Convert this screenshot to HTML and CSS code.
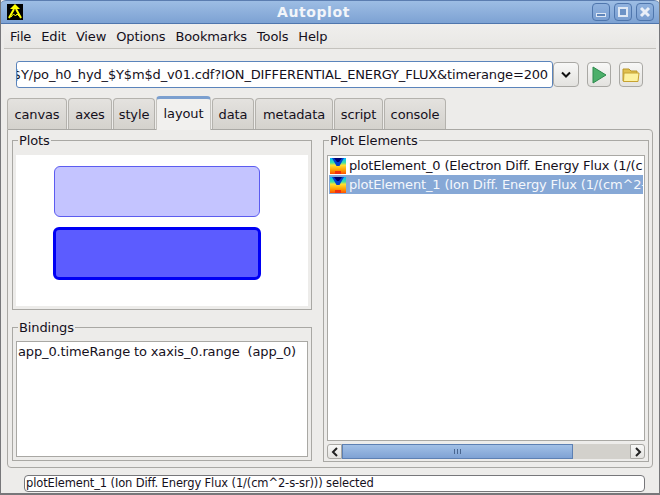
FILE: index.html
```html
<!DOCTYPE html>
<html lang="en">
<head>
  <meta charset="UTF-8">
  <title>Autoplot</title>
  <link rel="stylesheet" href="styles.css">
</head>
<body>

<div class="window">
  <div class="titlebar">
    <svg class="logo" width="16" height="16" viewBox="0 0 16 16">
      <rect width="16" height="16" fill="#000"/>
      <path d="M8 0L13 5H3Z" fill="#ffff00"/>
      <path d="M7 5L2 14M9 5L14 14" stroke="#ffff00" stroke-width="2" fill="none"/>
      <path d="M4 13L6.500 10L8.500 12L10 10L12 12" stroke="#ffff00" fill="none"/>
    </svg>
    <div class="title">Autoplot</div>
    <div class="winbtns">
      <div class="winbtn">
        <svg width="18" height="18" viewBox="0 0 18 18"><rect x="4.500" y="10.500" width="9" height="3" fill="#5f86bb" stroke="#dfe8f4"/></svg>
      </div>
      <div class="winbtn">
        <svg width="18" height="18" viewBox="0 0 18 18"><rect x="5" y="5" width="8" height="8" fill="#6d93c6" stroke="#dfe8f4" stroke-width="2"/></svg>
      </div>
      <div class="winbtn">
        <svg width="18" height="18" viewBox="0 0 18 18"><path d="M5 5L13 13M13 5L5 13" stroke="#e9eff8" stroke-width="3"/></svg>
      </div>
    </div>
  </div>

  <div class="menubar">
    <span>File</span><span>Edit</span><span>View</span><span>Options</span><span>Bookmarks</span><span>Tools</span><span>Help</span>
  </div>

  <div class="urlrow">
    <div class="urlfield"><span>$Y/po_h0_hyd_$Y$m$d_v01.cdf?ION_DIFFERENTIAL_ENERGY_FLUX&amp;timerange=200</span></div>
    <div class="btn combo">
      <svg width="12" height="8" viewBox="0 0 12 8"><path d="M2 1.500L6 5.500L10 1.500" fill="none" stroke="#111" stroke-width="2"/></svg>
    </div>
    <div class="btn play">
      <svg width="16" height="18" viewBox="0 0 16 18"><path d="M2 1L15 9L2 17Z" fill="#4caf6a" stroke="#2c8a4c"/></svg>
    </div>
    <div class="btn folder">
      <svg width="18" height="16" viewBox="0 0 18 16"><path d="M1 14V2H7L9 4H15V14Z" fill="#e0c050" stroke="#b8962a"/><path d="M1.500 14.500L2 6H17L16 14.500Z" fill="#fdf2a0" stroke="#c6a232"/></svg>
    </div>
  </div>

  <div class="tabs">
    <div class="tab tab-canvas">canvas</div>
    <div class="tab tab-axes">axes</div>
    <div class="tab tab-style">style</div>
    <div class="tab tab-layout active">layout</div>
    <div class="tab tab-data">data</div>
    <div class="tab tab-metadata">metadata</div>
    <div class="tab tab-script">script</div>
    <div class="tab tab-console">console</div>
  </div>

  <div class="panel">
    <div class="leftcol">
      <fieldset class="group plots">
        <legend>Plots</legend>
        <div class="canvas">
          <div class="plot plot-0"></div>
          <div class="plot plot-1"></div>
        </div>
      </fieldset>
      <fieldset class="group bindings">
        <legend>Bindings</legend>
        <div class="bindlist">app_0.timeRange to xaxis_0.range&nbsp; (app_0)</div>
      </fieldset>
    </div>

    <fieldset class="group elements">
      <legend>Plot Elements</legend>
      <div class="elist">
        <div class="row">
          <svg class="heat" width="16" height="16" viewBox="0 0 16 16"><use href="#heatmap"/></svg>
          <span>plotElement_0 (Electron Diff. Energy Flux (1/(cm^2-s-sr)))</span>
        </div>
        <div class="row selected">
          <svg class="heat" width="16" height="16" viewBox="0 0 16 16"><use href="#heatmap"/></svg>
          <span>plotElement_1 (Ion Diff. Energy Flux (1/(cm^2-s-sr)))</span>
        </div>
      </div>
      <div class="hscroll">
        <div class="arrow">
          <svg width="8" height="10" viewBox="0 0 8 10"><path d="M6 1L2 5L6 9" fill="none" stroke="#222" stroke-width="2"/></svg>
        </div>
        <div class="track">
          <div class="thumb"><i></i><i></i><i></i></div>
        </div>
        <div class="arrow">
          <svg width="8" height="10" viewBox="0 0 8 10"><path d="M2 1L6 5L2 9" fill="none" stroke="#222" stroke-width="2"/></svg>
        </div>
      </div>
    </fieldset>
  </div>

  <div class="statusrow">
    <div class="status">plotElement_1 (Ion Diff. Energy Flux (1/(cm^2-s-sr))) selected</div>
  </div>
</div>

<svg width="0" height="0" class="defs">
  <defs>
    <linearGradient id="heatfill" x1="0" y1="0" x2="0" y2="1">
      <stop offset="0" stop-color="#00b8ff"/>
      <stop offset="0.3" stop-color="#40e0a0"/>
      <stop offset="0.45" stop-color="#ffe030"/>
      <stop offset="0.75" stop-color="#ffa000"/>
      <stop offset="1" stop-color="#ff5000"/>
    </linearGradient>
    <g id="heatmap">
      <rect width="16" height="16" fill="url(#heatfill)"/>
      <path d="M2 0H14L9.500 8H6.500Z" fill="#0040d0"/>
      <path d="M4 0H12L9 4H7Z" fill="#000070"/>
      <rect x="5" y="13" width="6" height="3" fill="#f03010"/>
    </g>
  </defs>
</svg>

</body>
</html>
```

FILE: styles.css
```css
* {
  box-sizing: border-box;
}

body {
  margin: 0;
  background-color: #edecea;
  font-family: "DejaVu Sans", sans-serif;
  font-size: 13px;
  letter-spacing: -0.13px;
  color: #15101c;
}

.defs {
  display: block;
  height: 0;
}

.window {
  width: 660px;
  height: 495px;
  background-color: #edecea;
  border-left: 1px solid #77777a;
  border-right: 1px solid #77777a;
  border-bottom: 2px solid #77777a;
  overflow: hidden;
}

/* title bar */
.titlebar {
  height: 24px;
  margin: 0 -1px;
  padding: 3px 6px 0 7px;
  display: flex;
  background: linear-gradient(#9dbde4, #7da2d3);
  border-top: 1px solid #5b7db0;
  border-bottom: 1px solid #4f76ad;
  border-radius: 6px 6px 0 0;
}

.logo {
  flex: none;
}

.title {
  flex: 1;
  padding-left: 12px;
  text-align: center;
  font-size: 14px;
  font-weight: bold;
  letter-spacing: 0.6px;
  color: #f2f5fa;
}

.winbtns {
  display: flex;
  gap: 4px;
  margin-top: -1px;
}

.winbtn {
  width: 18px;
  height: 18px;
  border: 1px solid #4f76ad;
  border-radius: 4px;
  background: linear-gradient(#90b2de, #7a9fd1);
  display: flex;
  align-items: center;
  justify-content: center;
}

.winbtn svg {
  margin: -1px;
  flex: none;
}

/* menu */
.menubar {
  height: 25px;
  margin: 0 3px;
  padding: 1px 6px 0;
  display: flex;
  align-items: center;
  gap: 10px;
  border-bottom: 1px solid #c4c2bd;
  background: linear-gradient(#f0efed, #e8e7e4);
}

/* url row */
.urlrow {
  display: flex;
  align-items: center;
  height: 27px;
  margin: 12px 0 0 15px;
}

.urlfield {
  width: 537px;
  height: 27px;
  border: 1px solid #5b84bb;
  border-radius: 3px;
  background-color: #fff;
  overflow: hidden;
  display: flex;
  justify-content: flex-end;
  align-items: center;
  padding-right: 4px;
  letter-spacing: -0.15px;
  white-space: nowrap;
}

.btn {
  width: 24px;
  height: 25px;
  border: 1px solid #a9a8a4;
  border-radius: 4px;
  background: linear-gradient(#f8f8f7, #e3e2df);
  display: flex;
  align-items: center;
  justify-content: center;
}

.combo {
  margin-right: 8px;
  width: 26px;
}

.play {
  margin-right: 8px;
}

/* tabs */
.tabs {
  display: flex;
  align-items: flex-end;
  height: 33px;
  margin: 8px 0 0 6px;
  gap: 1px;
}

.tab {
  height: 31px;
  padding-top: 8px;
  text-align: center;
  border: 1px solid #b4b2ad;
  border-bottom: none;
  border-radius: 4px 4px 0 0;
  background: linear-gradient(#e4e2df, #d4d2cd);
}

.tab-canvas { width: 60px; }
.tab-axes { width: 44px; }
.tab-style { width: 42px; }
.tab-layout { width: 55px; }
.tab-data { width: 42px; }
.tab-metadata { width: 78px; }
.tab-script { width: 49px; }
.tab-console { width: 62px; }

.tab.active {
  height: 34px;
  margin-bottom: -1px;
  padding-top: 7px;
  position: relative;
  background: #f1f0ee;
  border-top: 3px solid #7b9fcf;
  border-color: #7b9fcf #c4c2bd #c4c2bd;
}

/* main panel */
.panel {
  width: 646px;
  height: 339px;
  margin-left: 6px;
  padding: 3px 3px 4px 4px;
  display: flex;
  gap: 11px;
  border: 1px solid #a9a8a4;
  border-radius: 0 4px 4px 4px;
}

.leftcol {
  width: 300px;
  display: flex;
  flex-direction: column;
  gap: 10px;
}

.group {
  margin: 0;
  padding: 0 3px 3px;
  min-width: 0;
  border: 1px solid #a9a8a4;
  display: flex;
  flex-direction: column;
}

.group legend {
  margin-left: 2px;
  padding: 0 1px;
  line-height: 15px;
}

.plots {
  height: 177px;
  padding-top: 7px;
}

.canvas {
  height: 151px;
  padding: 11px 0 0 38px;
  background-color: #fff;
}

.plot {
  width: 206px;
  height: 51px;
  border-radius: 6px;
}

.plot-0 {
  background-color: #c4c4ff;
  border: 1px solid #5c5cf0;
}

.plot-1 {
  width: 208px;
  height: 53px;
  margin: 10px 0 0 -1px;
  background-color: #5c5cff;
  border: 3px solid #0000f4;
}

.bindings {
  height: 141px;
  padding-top: 6px;
}

.bindlist {
  height: 116px;
  padding: 2px 1px;
  background-color: #fff;
  border: 1px solid #a9a8a4;
  white-space: nowrap;
}

.elements {
  width: 326px;
  height: 329px;
  padding-top: 7px;
}

.elist {
  height: 285px;
  flex: none;
  padding: 0 1px;
  background-color: #fff;
  border: 1px solid #a9a8a4;
  border-bottom: none;
  overflow: hidden;
}

.row {
  height: 19px;
  display: flex;
  align-items: center;
  gap: 3px;
  letter-spacing: -0.16px;
  white-space: nowrap;
  overflow: hidden;
}

.row.selected {
  background-color: #86a8d6;
  color: #f4f7fc;
}

.heat {
  flex: none;
  margin-left: 1px;
}

/* horizontal scrollbar */
.hscroll {
  height: 19px;
  flex: none;
  display: flex;
  border-top: 1px solid #a9a8a4;
  padding: 3px 0 0;
}

.arrow {
  width: 15px;
  flex: none;
  display: flex;
  align-items: center;
  justify-content: center;
  border: 1px solid #a9a8a4;
  background: linear-gradient(#f8f8f7, #e3e2df);
  border-radius: 3px 0 0 3px;
}

.arrow:last-child {
  border-radius: 0 3px 3px 0;
}

.track {
  flex: 1;
  background-color: #d3d1cc;
}

.thumb {
  width: 231px;
  height: 100%;
  display: flex;
  gap: 2px;
  align-items: center;
  justify-content: center;
  border: 1px solid #5d80b3;
  background: linear-gradient(#a2c0e6, #7fa2d4);
}

.thumb i {
  display: block;
  width: 1px;
  height: 5px;
  background-color: #48658f;
}

/* status */
.statusrow {
  margin: 7px 0 0 23px;
}

.status {
  width: 621px;
  height: 17px;
  padding-left: 1px;
  border: 1px solid #77777a;
  border-radius: 4px;
  background-color: #fff;
  font-size: 11.500px;
  line-height: 15px;
  white-space: nowrap;
}
```
